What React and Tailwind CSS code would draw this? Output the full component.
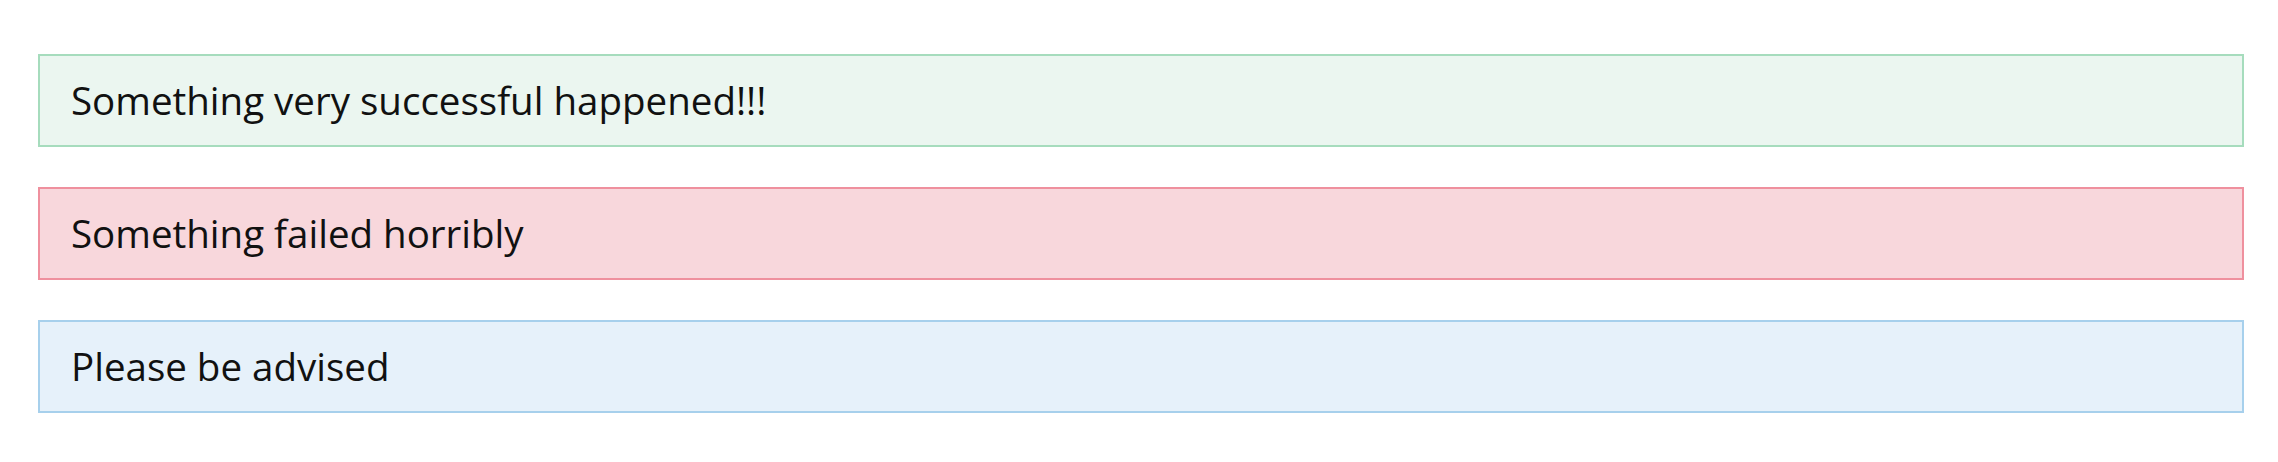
const alerts = [
  { text: 'Something very successful happened!!!', className: 'bg-[#ebf6f0] border-[#a6dcbd]' },
  { text: 'Something failed horribly', className: 'bg-[#f8d7dc] border-[#ef909e]' },
  { text: 'Please be advised', className: 'bg-[#e6f1fa] border-[#a7d0ec]' },
]

function Alert({ text, className }) {
  return (
    <div className={`border-2 pl-[31px] pr-[33px] py-[18px] text-[38.5px] leading-[53px] text-[#111] ${className}`}>
      {text}
    </div>
  )
}

export default function App() {
  return (
    <div
      className="min-h-[462px] bg-white pt-[54px] pl-[38px] pr-[34px] flex flex-col gap-[40px]"
      style={{ fontFamily: '"Open Sans", "Noto Sans", sans-serif' }}
    >
      {alerts.map((a) => (
        <Alert key={a.text} {...a} />
      ))}
    </div>
  )
}
